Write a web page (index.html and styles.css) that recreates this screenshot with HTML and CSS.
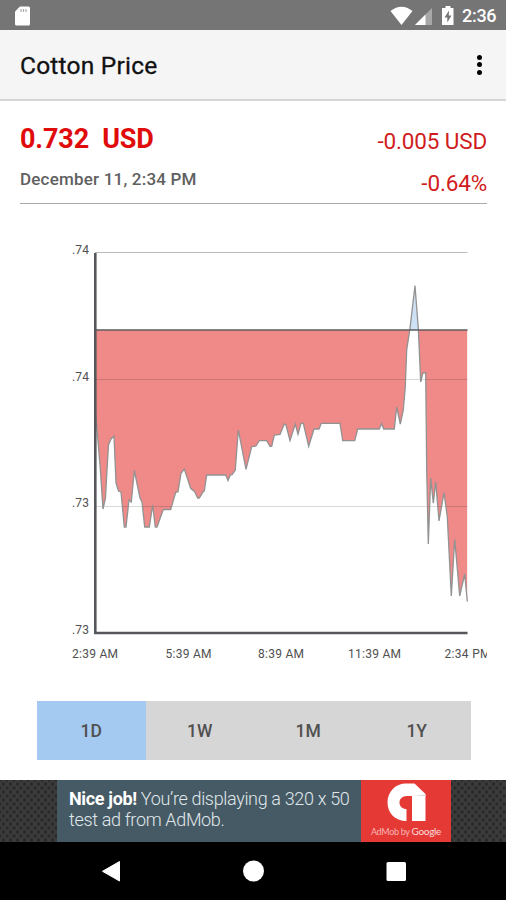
FILE: index.html
```html
<!DOCTYPE html>
<html lang="en">
  <head>
    <meta charset="utf-8">
    <title>Cotton Price</title>
    <link rel="stylesheet" href="styles.css">
  </head>
  <body>
    <div class="status-bar">
      <svg class="sd-icon" width="17" height="20" viewBox="0 0 17 20">
        <path d="M6 0.5H14.5Q16 0.5 16 2V18Q16 19.5 14.5 19.5H2.5Q1 19.5 1 18V5.5Z" fill="#fff"/>
        <path d="M7 3v3M9.5 3v3M12 3v3" stroke="#aaa" stroke-width="1.2"/>
      </svg>
      <div class="status-right">
        <svg width="66" height="20" viewBox="0 0 66 20">
          <path d="M0.5 5Q11.500 -3.500 22.500 5L11.500 19Z" fill="#fff"/>
          <path d="M42 2V19H25Z" fill="#a8a8a8"/>
          <path d="M35.500 8.500V19H25Z" fill="#fff"/>
          <path d="M55.500 0H60.500V2H63.500V19H52V2H55.500Z" fill="#fff"/>
          <path d="M59 4.500L54.500 11.500H57.300V16.500L61.500 9.500H58.800Z" fill="#757575"/>
        </svg>
        <span class="clock">2:36</span>
      </div>
    </div>

    <div class="app-bar">
      <h1>Cotton Price</h1>
      <div class="menu">
        <span></span>
        <span></span>
        <span></span>
      </div>
    </div>

    <div class="summary">
      <div class="summary-row">
        <span class="price">0.732&nbsp; USD</span>
        <span class="change">-0.005 USD</span>
      </div>
      <div class="summary-row">
        <span class="date">December 11, 2:34 PM</span>
        <span class="change percent">-0.64%</span>
      </div>
    </div>

    <svg class="chart" width="427" height="434" viewBox="60 236 427 434">
      <defs>
        <clipPath id="below"><rect x="95" y="330" width="372.500" height="303"/></clipPath>
        <clipPath id="above"><rect x="95" y="253" width="372.500" height="77"/></clipPath>
      </defs>
      <path id="loss" class="loss" clip-path="url(#below)"/>
      <path id="gain" class="gain" clip-path="url(#above)"/>
      <path class="grid top" d="M95 252.500H467.500"/>
      <path class="grid" d="M95 379.500H467.500M95 506.500H467.500"/>
      <path id="line" class="line"/>
      <path class="open" d="M95 330H467.500"/>
      <path class="axis" d="M95.300 253V633H467.500"/>
      <g class="label">
        <text x="72" y="253.500" textLength="17">.74</text>
        <text x="72" y="380.500" textLength="17">.74</text>
        <text x="72" y="507" textLength="17">.73</text>
        <text x="72" y="633.500" textLength="17">.73</text>
        <text x="72" y="658" textLength="46">2:39 AM</text>
        <text x="165.500" y="658" textLength="46">5:39 AM</text>
        <text x="258" y="658" textLength="46">8:39 AM</text>
        <text x="348" y="658" textLength="53">11:39 AM</text>
        <text x="444.500" y="658" textLength="46">2:34 PM</text>
      </g>
    </svg>

    <div class="tabs">
      <div class="tab active">1D</div>
      <div class="tab">1W</div>
      <div class="tab">1M</div>
      <div class="tab">1Y</div>
    </div>

    <div class="ad">
      <div class="ad-text"><b>Nice job!</b> You’re displaying a 320 x 50<br>test ad from AdMob.</div>
      <div class="ad-logo">
        <svg width="40" height="39" viewBox="0 0 40 39">
          <path d="M20 0.500H28.500L39.500 11V38H26V13H21C16 13 13.500 16 13.500 19.500C13.500 23.500 16.500 26 20.500 26V38C9 38 1.500 30 1.500 19.500C1.500 8.500 9.500 0.500 20 0.500Z" fill="#fff"/>
          <path d="M26 13L39.500 11.500V13Z" fill="#ddd"/>
        </svg>
        <div class="ad-by">AdMob by <b>Google</b></div>
      </div>
    </div>

    <div class="nav-bar">
      <svg width="506" height="58" viewBox="0 0 506 58">
        <path d="M119.500 19.500V39L102.500 29.300Z" fill="#fff" stroke="#fff" stroke-linejoin="round"/>
        <circle cx="253.500" cy="29" r="10.500" fill="#fff"/>
        <rect x="386.500" y="20" width="19.500" height="19" rx="1.500" fill="#fff"/>
      </svg>
    </div>

    <script src="chart.js"></script>
  </body>
</html>
```
FILE: styles.css
```css
body {
  margin: 0;
  width: 506px;
  height: 900px;
  overflow: hidden;
  display: flex;
  flex-direction: column;
  font-family: Roboto, sans-serif;
  background-color: #fff;
}

/* Status bar */
.status-bar {
  height: 30px;
  box-sizing: border-box;
  padding: 1px 9px 0 14px;
  display: flex;
  justify-content: space-between;
  align-items: center;
  background-color: #757575;
  color: #fff;
}

.status-right {
  display: flex;
  align-items: center;
  gap: 6px;
}

.clock {
  font-size: 18px;
  font-weight: 500;
  letter-spacing: -0.3px;
  line-height: 20px;
  width: 35px;
  white-space: nowrap;
  padding-top: 1px;
}

/* App bar */
.app-bar {
  height: 71px;
  box-sizing: border-box;
  border-bottom: 2px solid #d5d5d5;
  padding: 0 24px 0 20px;
  display: flex;
  justify-content: space-between;
  align-items: center;
  background-color: #f5f5f5;
}

h1 {
  margin: 1px 0 0;
  font-size: 24.5px;
  font-weight: 400;
  letter-spacing: 0.22px;
  color: #111;
  -webkit-text-stroke: 0.3px #111;
}

.menu {
  display: flex;
  flex-direction: column;
  gap: 2.5px;
}

.menu span {
  width: 5px;
  height: 5px;
  border-radius: 50%;
  background-color: #000;
}

/* Price summary */
.summary {
  height: 103px;
  box-sizing: border-box;
  margin: 0 19px 0 20px;
  padding-top: 19px;
  border-bottom: 1px solid #aaa;
}

.summary-row {
  height: 42px;
  display: flex;
  justify-content: space-between;
  align-items: center;
}

.price {
  font-size: 27px;
  font-weight: 700;
  letter-spacing: -0.15px;
  color: #e00c0c;
  margin-top: -5px;
}

.change {
  font-size: 22.5px;
  letter-spacing: -0.15px;
  color: #d01c20;
  margin-top: -1px;
}

.date {
  font-size: 17px;
  font-weight: 500;
  letter-spacing: 0.2px;
  color: #606060;
  margin-top: -8px;
}

/* Chart */
.chart {
  display: block;
  flex: none;
  margin: 32px 0 31px 60px;
}

.loss {
  fill: #ef8a89;
}

.gain {
  fill: #cfe1f4;
}

.line {
  fill: none;
  stroke: #929292;
  stroke-width: 1.3;
}

.grid {
  fill: none;
  stroke: rgba(0, 0, 0, 0.15);
}

.top {
  stroke: #bbb;
}

.open {
  stroke: #5c5c60;
  stroke-width: 1.6;
}

.axis {
  fill: none;
  stroke: #55575a;
  stroke-width: 2.6;
}

.label {
  font-size: 12px;
  fill: #505050;
}

/* Range tabs */
.tabs {
  display: flex;
  flex: none;
  height: 59px;
  margin: 0 35px 20px 37px;
}

.tab {
  flex: 1;
  display: flex;
  align-items: center;
  justify-content: center;
  font-size: 17.5px;
  font-weight: 500;
  color: #505050;
  background-color: #d6d6d6;
}

.active {
  background-color: #a5caf1;
}

/* Ad banner */
.ad {
  height: 62px;
  flex: none;
  display: flex;
  justify-content: center;
  padding-left: 2px;
  background-color: #3b3b3b;
  background-image: radial-gradient(#292929 1.2px, transparent 1.8px), radial-gradient(#292929 1.2px, transparent 1.8px);
  background-size: 7px 8px;
  background-position: 0 0, 3.5px 4px;
}

.ad-text {
  width: 304px;
  box-sizing: border-box;
  padding: 8px 0 0 12px;
  font-size: 18px;
  font-weight: 300;
  letter-spacing: -0.34px;
  line-height: 21px;
  white-space: nowrap;
  color: #e0e8ec;
  background-color: #455a64;
}

.ad-text b {
  font-weight: 700;
  color: #fff;
}

.ad-logo {
  width: 90px;
  display: flex;
  flex-direction: column;
  align-items: center;
  padding-top: 3px;
  box-sizing: border-box;
  background-color: #e53935;
}

.ad-by {
  font-family: Lato, sans-serif;
  font-size: 9px;
  line-height: 13px;
  margin-top: 3px;
  white-space: nowrap;
  letter-spacing: -0.3px;
  color: #f7b5b3;
}

.ad-by b {
  font-weight: 400;
  font-size: 10px;
  color: #fbdcdb;
}

/* Navigation bar */
.nav-bar {
  height: 58px;
  flex: none;
  background-color: #000;
}

.nav-bar svg {
  display: block;
}
```
FILE: chart.js
```js
// Price at the open, everything below it is a loss
const openY = 330;

const points = [
  [95.5, 413], [98, 441], [100, 465], [103, 509], [105.5, 498], [107, 470], [108.5, 445], [111, 439], [114, 436],
  [116, 483], [118.5, 491], [121, 492], [124.3, 527], [126, 527], [129, 500], [131.3, 502], [134.3, 470.5],
  [140, 498], [142, 502], [144.7, 527], [149.3, 527], [152.7, 505], [155.3, 527], [157, 527], [163.3, 509.5],
  [170.7, 509.5], [175.7, 492.3], [178, 491.7], [181, 473.3], [184.3, 469], [190.7, 488.3], [194.7, 491.7],
  [197.7, 498], [199.3, 498], [202.7, 492.3], [204.3, 491], [206.7, 475], [225.7, 475], [228, 480.5],
  [230.3, 475], [232.3, 474.5], [235.3, 470], [238.3, 430], [246, 469.3], [251.7, 446.7], [256, 446],
  [259.3, 440.7], [266.7, 440.7], [270, 446.3], [271.7, 446.3], [274.3, 435], [280, 434.5], [284.3, 424],
  [286, 425], [290, 440.7], [295.3, 424], [298, 434.3], [301, 423.3], [303.3, 423.3], [308.7, 446.3],
  [314, 429], [319, 429], [321.3, 423.3], [340, 423.3], [342.7, 440.7], [354.7, 440.7], [357.7, 429],
  [379.3, 429], [381.7, 423.5], [383.7, 429], [394.3, 429], [396.7, 407], [400.3, 424], [403.3, 410],
  [405.3, 386.7], [406.7, 350], [410, 328.3], [415, 285.7], [418.3, 328.3], [420.7, 382], [422.7, 373.3],
  [425.7, 372.7], [426.7, 470], [428.3, 544], [430.7, 478], [433.3, 503.3], [435.7, 481.7], [439, 521],
  [444, 492.7], [447.3, 516.7], [451.3, 596], [454.7, 539.3], [459.7, 596], [464.7, 574], [467.3, 601.5]
];

const path = "M" + points.map((p) => p.join(" ")).join("L");
const area = path + "V" + openY + "H" + points[0][0] + "Z";

document.getElementById("line").setAttribute("d", path);
document.getElementById("loss").setAttribute("d", area);
document.getElementById("gain").setAttribute("d", area);
```
